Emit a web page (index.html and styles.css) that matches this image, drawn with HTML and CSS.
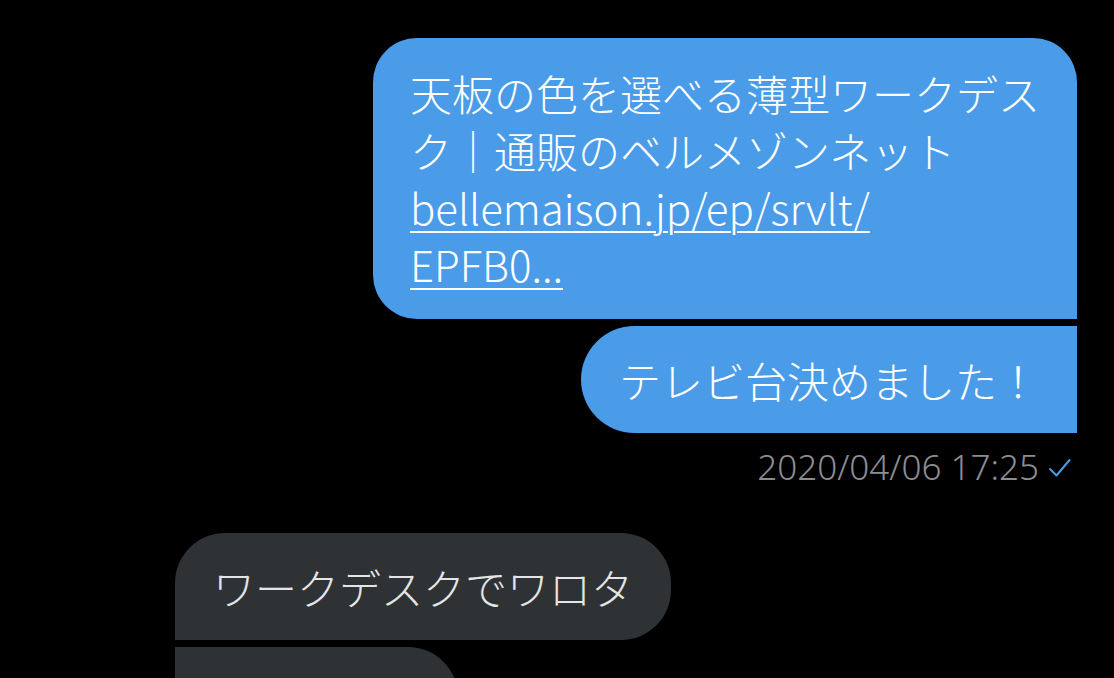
FILE: index.html
```html
<!DOCTYPE html>
<html lang="ja">
<head>
  <meta charset="utf-8" />
  <meta name="viewport" content="width=device-width, initial-scale=1.0" />
  <title>メッセージ</title>
  <link rel="stylesheet" href="styles.css">
</head>
<body>
  <main class="thread">
    <div class="group out">
      <div class="bubble out first">
        天板の色を選べる薄型ワークデス<br>ク｜通販のベルメゾンネット<br>
        <a class="link" href="#">bellemaison.jp/ep/srvlt/<br>EPFB0...</a>
      </div>
      <div class="bubble out last">テレビ台決めました！</div>
      <div class="meta">
        <span>2020/04/06 17:25</span>
        <svg class="check" width="24" height="20" viewBox="0 0 24 20">
          <path d="M2 11 L8.5 17.5 L21.5 2" fill="none" stroke="#4a9be8" stroke-width="2" stroke-linecap="round" stroke-linejoin="round"/>
        </svg>
      </div>
    </div>

    <div class="group in">
      <div class="bubble in first">ワークデスクでワロタ</div>
      <div class="bubble in next"></div>
    </div>
  </main>
</body>
</html>
```

FILE: styles.css
```css
html, body {
  margin: 0;
  height: 100%;
  overflow: hidden;
}
body {
  background-color: #000000;
  font-family: 'Noto Sans CJK JP', 'Noto Sans', sans-serif;
  font-weight: 300;
  color: #ffffff;
}
.thread {
  display: flex;
  flex-direction: column;
  padding: 38px 37px 0 175px;
}
.group {
  display: flex;
  flex-direction: column;
  gap: 7px;
}
.group.out {
  align-items: flex-end;
}
.group.in {
  align-items: flex-start;
  margin-top: 44px;
}
.bubble {
  box-sizing: border-box;
  font-size: 42px;
  line-height: 57px;
  padding: 25px 38px;
  white-space: nowrap;
}
.bubble.out {
  background-color: #4a9be8;
  color: #ffffff;
}
.bubble.out.first {
  padding: 26px 37px 27px 37px;
  border-radius: 44px 44px 0 44px;
}
.bubble.out.last {
  border-radius: 54px 0 0 54px;
}
.bubble.in {
  background-color: #2f3235;
  color: #e4e5e6;
}
.bubble.in.first {
  border-radius: 50px 50px 50px 0;
}
.bubble.in.next {
  width: 283px;
  height: 107px;
  border-radius: 0 50px 50px 50px;
}
.link {
  color: #ffffff;
  text-decoration: underline;
  text-decoration-thickness: 2px;
  text-underline-offset: 6px;
}
.meta {
  display: flex;
  align-items: center;
  gap: 9px;
  margin-top: 5px;
  padding-right: 5px;
  font-family: 'Noto Sans', sans-serif;
  font-weight: 300;
  font-size: 35px;
  line-height: 44px;
  color: #8b8d91;
}
.check {
  display: block;
  margin-top: 2px;
}
```
